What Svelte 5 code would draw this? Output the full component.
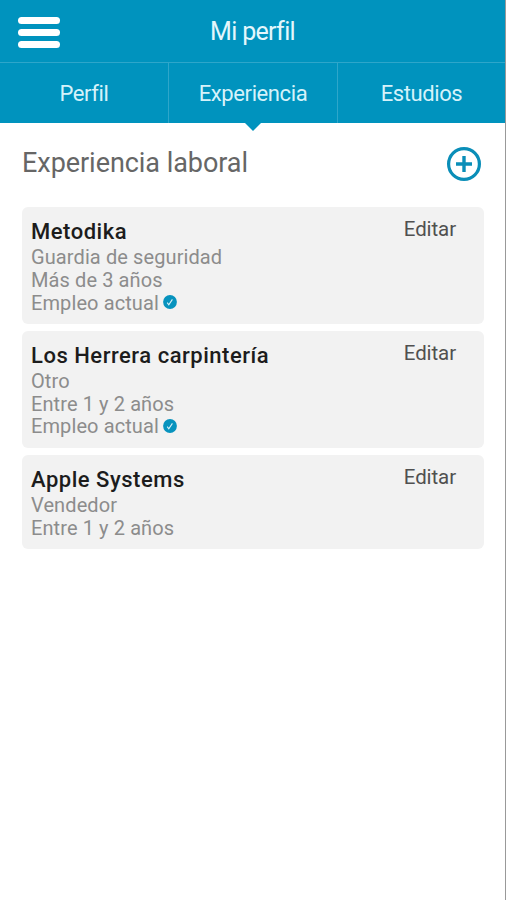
<script lang="ts">
  interface Job {
    company: string
    role: string
    duration: string
    current: boolean
  }

  const tabs = ['Perfil', 'Experiencia', 'Estudios']
  let activeTab = $state('Experiencia')

  const jobs: Job[] = [
    { company: 'Metodika', role: 'Guardia de seguridad', duration: 'Más de 3 años', current: true },
    { company: 'Los Herrera carpintería', role: 'Otro', duration: 'Entre 1 y 2 años', current: true },
    { company: 'Apple Systems', role: 'Vendedor', duration: 'Entre 1 y 2 años', current: false }
  ]
</script>

<div class="screen">
  <header class="top-bar">
    <button type="button" class="btn-menu" aria-label="Menú">
      <span></span>
      <span></span>
      <span></span>
    </button>
    <h1>Mi perfil</h1>
  </header>

  <nav class="tabs">
    {#each tabs as tab}
      <button type="button" class="tab" class:active={tab === activeTab} onclick={() => (activeTab = tab)}>
        <span>{tab}</span>
      </button>
    {/each}
  </nav>

  <main>
    <div class="section-header">
      <h2>Experiencia laboral</h2>
      <button type="button" class="btn-add" aria-label="Agregar">
        <svg width="36" height="36" viewBox="0 0 36 36" fill="none" stroke="#0a8eb8">
          <circle cx="18" cy="18" r="15.4" stroke-width="3.2" />
          <path d="M18 10v16M10 18h16" stroke-width="3.4" />
        </svg>
      </button>
    </div>

    <div class="jobs">
      {#each jobs as job}
        <article class="job">
          <div class="job-info">
            <h3>{job.company}</h3>
            <p>{job.role}</p>
            <p>{job.duration}</p>
            {#if job.current}
              <p class="current">
                <span>Empleo actual</span>
                <svg width="14" height="14" viewBox="0 0 14 14" fill="none">
                  <circle cx="7" cy="7" r="6.9" fill="#0793be" />
                  <path d="M4.2 7.6l1.6 2.2 3.6-5.4" stroke="#d9f1f8" stroke-width="1.1" />
                </svg>
              </p>
            {/if}
          </div>
          <button type="button" class="btn-edit">Editar</button>
        </article>
      {/each}
    </div>
  </main>
</div>

<style>
  :global(body) {
    background: #fff;
  }

  .screen {
    box-sizing: border-box;
    height: 900px;
    border-right: 1px solid #999;
    font-family: Roboto, sans-serif;
    overflow: hidden;
  }

  button {
    padding: 0;
    border: none;
    background: none;
    font-family: inherit;
    cursor: pointer;
  }

  h1, h2, h3, p {
    margin: 0;
    font-weight: 400;
    white-space: nowrap;
  }

  .top-bar {
    display: grid;
    grid-template-columns: 60px 1fr 60px;
    align-items: center;
    height: 62px;
    background: #0093be;
    border-bottom: 1px solid #2ea6ca;
  }

  .btn-menu {
    display: flex;
    flex-direction: column;
    gap: 5px;
    width: 42px;
    margin: 2px 0 0 18px;
  }

  .btn-menu span {
    height: 7px;
    border-radius: 3.5px;
    background: #fff;
  }

  h1 {
    color: #e4f7fc;
    font-size: 25px;
    letter-spacing: -0.65px;
    text-align: center;
  }

  .tabs {
    display: grid;
    grid-template-columns: 168px 169px 1fr;
    height: 60px;
    background: #0093be;
  }

  .tab {
    position: relative;
    color: #d5f2fa;
    font-size: 22px;
    letter-spacing: -0.4px;
  }

  .tab + .tab {
    border-left: 1px solid #2ea6ca;
  }

  .tab.active::after {
    content: '';
    position: absolute;
    top: 100%;
    left: 50%;
    margin-left: -8px;
    border: 8px solid transparent;
    border-top-color: #0093be;
    border-bottom: none;
  }

  main {
    padding: 23px 21px 0 22px;
  }

  .section-header {
    display: flex;
    justify-content: space-between;
    align-items: center;
    height: 36px;
    margin-bottom: 25px;
  }

  h2 {
    padding-bottom: 2px;
    color: #666;
    font-size: 27px;
    letter-spacing: -0.05px;
  }

  .btn-add {
    height: 36px;
    margin-right: 2px;
  }

  .btn-add svg {
    display: block;
  }

  .jobs {
    display: flex;
    flex-direction: column;
    gap: 7px;
  }

  .job {
    display: flex;
    justify-content: space-between;
    align-items: flex-start;
    padding: 11px 28px 9.5px 9px;
    border-radius: 6px;
    background: #f2f2f2;
  }

  h3 {
    color: #1c1c1c;
    font-size: 22px;
    font-weight: 500;
    letter-spacing: 0.52px;
    line-height: 28px;
  }

  p {
    color: #8c8c8c;
    font-size: 20px;
    letter-spacing: 0.1px;
    line-height: 22.8px;
  }

  .current {
    display: flex;
    align-items: center;
    gap: 4px;
  }

  .current svg {
    margin-bottom: 1px;
  }

  .btn-edit {
    color: #505050;
    font-size: 20.5px;
    letter-spacing: -0.1px;
    line-height: 22px;
  }
</style>
